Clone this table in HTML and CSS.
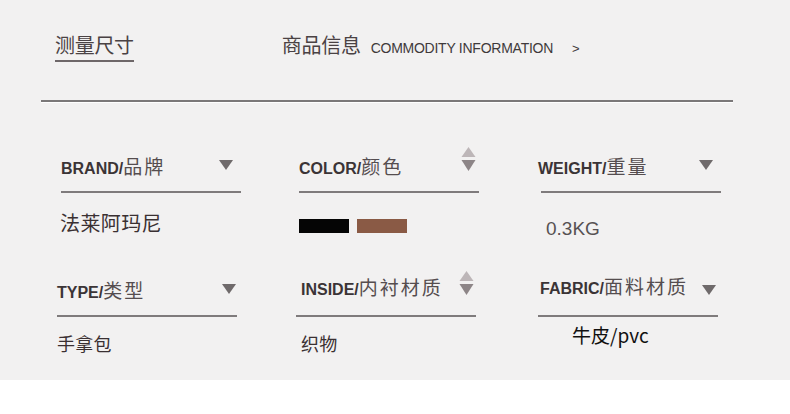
FILE: index.html
```html
<!DOCTYPE html>
<html lang="zh">
<head>
<meta charset="utf-8">
<link rel="stylesheet" href="styles.css">
</head>
<body>
<div class="panel">
  <div class="tabs">
    <div class="tab tab-active">测量尺寸</div>
    <div class="tab tab-info">
      <span class="tab-cn">商品信息</span>
      <span class="tab-en">COMMODITY INFORMATION</span>
      <span class="tab-chev">&gt;</span>
    </div>
  </div>
  <div class="divider"></div>
  <div class="grid">
    <div class="cell c1r1">
      <div class="hd">
        <span class="hd-text"><b>BRAND/</b><span class="hd-cn">品牌</span></span>
        <svg class="tri pr8" viewBox="0 0 14 10"><polygon points="0,0 14,0 7,10"/></svg>
      </div>
      <div class="val val-cn v1">法莱阿玛尼</div>
    </div>
    <div class="cell c2r1">
      <div class="hd">
        <span class="hd-text"><b>COLOR/</b><span class="hd-cn">颜色</span></span>
        <svg class="updown pr3" viewBox="0 0 14 24"><polygon class="up" points="7,0 14,10 0,10"/><polygon class="down" points="0,13 14,13 7,24"/></svg>
      </div>
      <div class="swatches">
        <span class="swatch sw-black"></span>
        <span class="swatch sw-brown"></span>
      </div>
    </div>
    <div class="cell c3r1">
      <div class="hd">
        <span class="hd-text"><b>WEIGHT/</b><span class="hd-cn">重量</span></span>
        <svg class="tri pr8" viewBox="0 0 14 10"><polygon points="0,0 14,0 7,10"/></svg>
      </div>
      <div class="val val-num">0.3KG</div>
    </div>

    <div class="cell c1r2">
      <div class="hd">
        <span class="hd-text"><b>TYPE/</b><span class="hd-cn">类型</span></span>
        <svg class="tri pr1" viewBox="0 0 14 10"><polygon points="0,0 14,0 7,10"/></svg>
      </div>
      <div class="val val-cn v2">手拿包</div>
    </div>
    <div class="cell c2r2">
      <div class="hd">
        <span class="hd-text"><b>INSIDE/</b><span class="hd-cn">内衬材质</span></span>
        <svg class="updown pr2" viewBox="0 0 14 24"><polygon class="up" points="7,0 14,10 0,10"/><polygon class="down" points="0,13 14,13 7,24"/></svg>
      </div>
      <div class="val val-cn v2">织物</div>
    </div>
    <div class="cell c3r2">
      <div class="hd">
        <span class="hd-text"><b>FABRIC/</b><span class="hd-cn">面料材质</span></span>
        <svg class="tri pr2" viewBox="0 0 14 10"><polygon points="0,0 14,0 7,10"/></svg>
      </div>
      <div class="val val-dark">牛皮/pvc</div>
    </div>
  </div>
</div>
</body>
</html>
```

FILE: styles.css
```css
html, body {
  margin: 0;
  padding: 0;
  background: #ffffff;
}
body {
  width: 790px;
  height: 414px;
  overflow: hidden;
  font-family: "Liberation Sans", "Noto Sans CJK SC", sans-serif;
}
.panel {
  background: #f2f1f1;
  height: 380px;
  padding-top: 33px;
  box-sizing: border-box;
}
.tabs {
  display: flex;
  align-items: flex-start;
  padding-left: 55px;
}
.tab {
  font-family: "Noto Sans CJK SC", sans-serif;
  font-size: 20px;
  line-height: 24px;
  color: #4a4244;
}
.tab-active {
  padding-bottom: 3px;
  border-bottom: 2px solid #6e6769;
  letter-spacing: -0.3px;
}
.tab-info {
  margin-left: 148px;
  display: flex;
  align-items: baseline;
}
.tab-cn {
  letter-spacing: -0.3px;
}
.tab-en {
  font-family: "Liberation Sans", sans-serif;
  font-size: 14px;
  letter-spacing: -0.25px;
  color: #3f3a3b;
  margin-left: 10px;
}
.tab-chev {
  font-family: "Liberation Sans", sans-serif;
  font-size: 13px;
  color: #3f3a3b;
  margin-left: 19px;
}
.divider {
  margin: 38px 0 0 41px;
  width: 692px;
  height: 2px;
  background: #7b7879;
  box-shadow: 0 1px 0 #ffffff;
}
.grid {
  display: grid;
  grid-template-columns: 180px 180px 180px;
  grid-template-rows: 124px auto;
  column-gap: 60px;
  padding-left: 57px;
  margin-top: 53px;
}
.cell {
  width: 180px;
}
.hd {
  display: flex;
  align-items: center;
  height: 24px;
  padding-bottom: 12px;
  border-bottom: 2px solid #7f7b7c;
}
.hd-text {
  line-height: 24px;
  white-space: nowrap;
}
.hd-text b {
  font-family: "Liberation Sans", sans-serif;
  font-weight: bold;
  font-size: 16px;
  color: #3b3436;
}
.hd-cn {
  font-family: "Noto Sans CJK SC", sans-serif;
  font-size: 19px;
  color: #554d4f;
  letter-spacing: 2px;
}
.tri {
  width: 14px;
  height: 10px;
  margin-left: auto;
  fill: #6f6a6b;
  position: relative;
  top: -2px;
}
.updown {
  width: 15px;
  height: 24px;
  margin-left: auto;
  position: relative;
  top: -8px;
}
.updown .up { fill: #bdb6b8; }
.updown .down { fill: #8d8587; }
.pr8 { margin-right: 8px; }
.pr3 { margin-right: 3px; }
.pr2 { margin-right: 2px; }
.pr1 { margin-right: 1px; }

.c1r1 { margin-left: 4px; }
.c2r1 { margin-left: 2px; }
.c3r1 { margin-left: 4px; }
.c3r1 .hd-text { margin-left: -3px; }
.c2r2 { margin-left: -1px; margin-top: -3px; }
.c2r2 .hd-text { margin-left: 5px; }
.c2r2 .hd { padding-bottom: 15px; }
.c2r2 .updown { top: -5px; }
.c3r2 { margin-left: 1px; margin-top: -4px; }
.c3r2 .hd-text { margin-left: 2px; }
.c3r2 .hd { padding-bottom: 16px; }
.c3r2 .tri { top: 3px; }

.val {
  line-height: 24px;
}
.val-cn {
  font-family: "Noto Sans CJK SC", sans-serif;
  color: #3a3032;
}
.v1 {
  font-size: 20px;
  letter-spacing: 0.4px;
  margin-top: 18px;
  margin-left: -1px;
}
.v2 {
  font-size: 18px;
  letter-spacing: 0.3px;
  margin-top: 14px;
}
.c2r2 .v2 { margin-left: 5px; margin-top: 14px; }
.val-num {
  font-family: "Liberation Sans", sans-serif;
  font-size: 19px;
  color: #575153;
  margin-top: 24px;
  margin-left: 5px;
}
.val-dark {
  font-family: "Noto Sans CJK SC", sans-serif;
  font-size: 19px;
  color: #111010;
  margin-top: 6px;
  margin-left: 34px;
}
.swatches {
  display: flex;
  gap: 8px;
  margin-top: 26px;
}
.swatch {
  width: 50px;
  height: 14px;
}
.sw-black { background: #050505; }
.sw-brown { background: #8a5a45; }
```
